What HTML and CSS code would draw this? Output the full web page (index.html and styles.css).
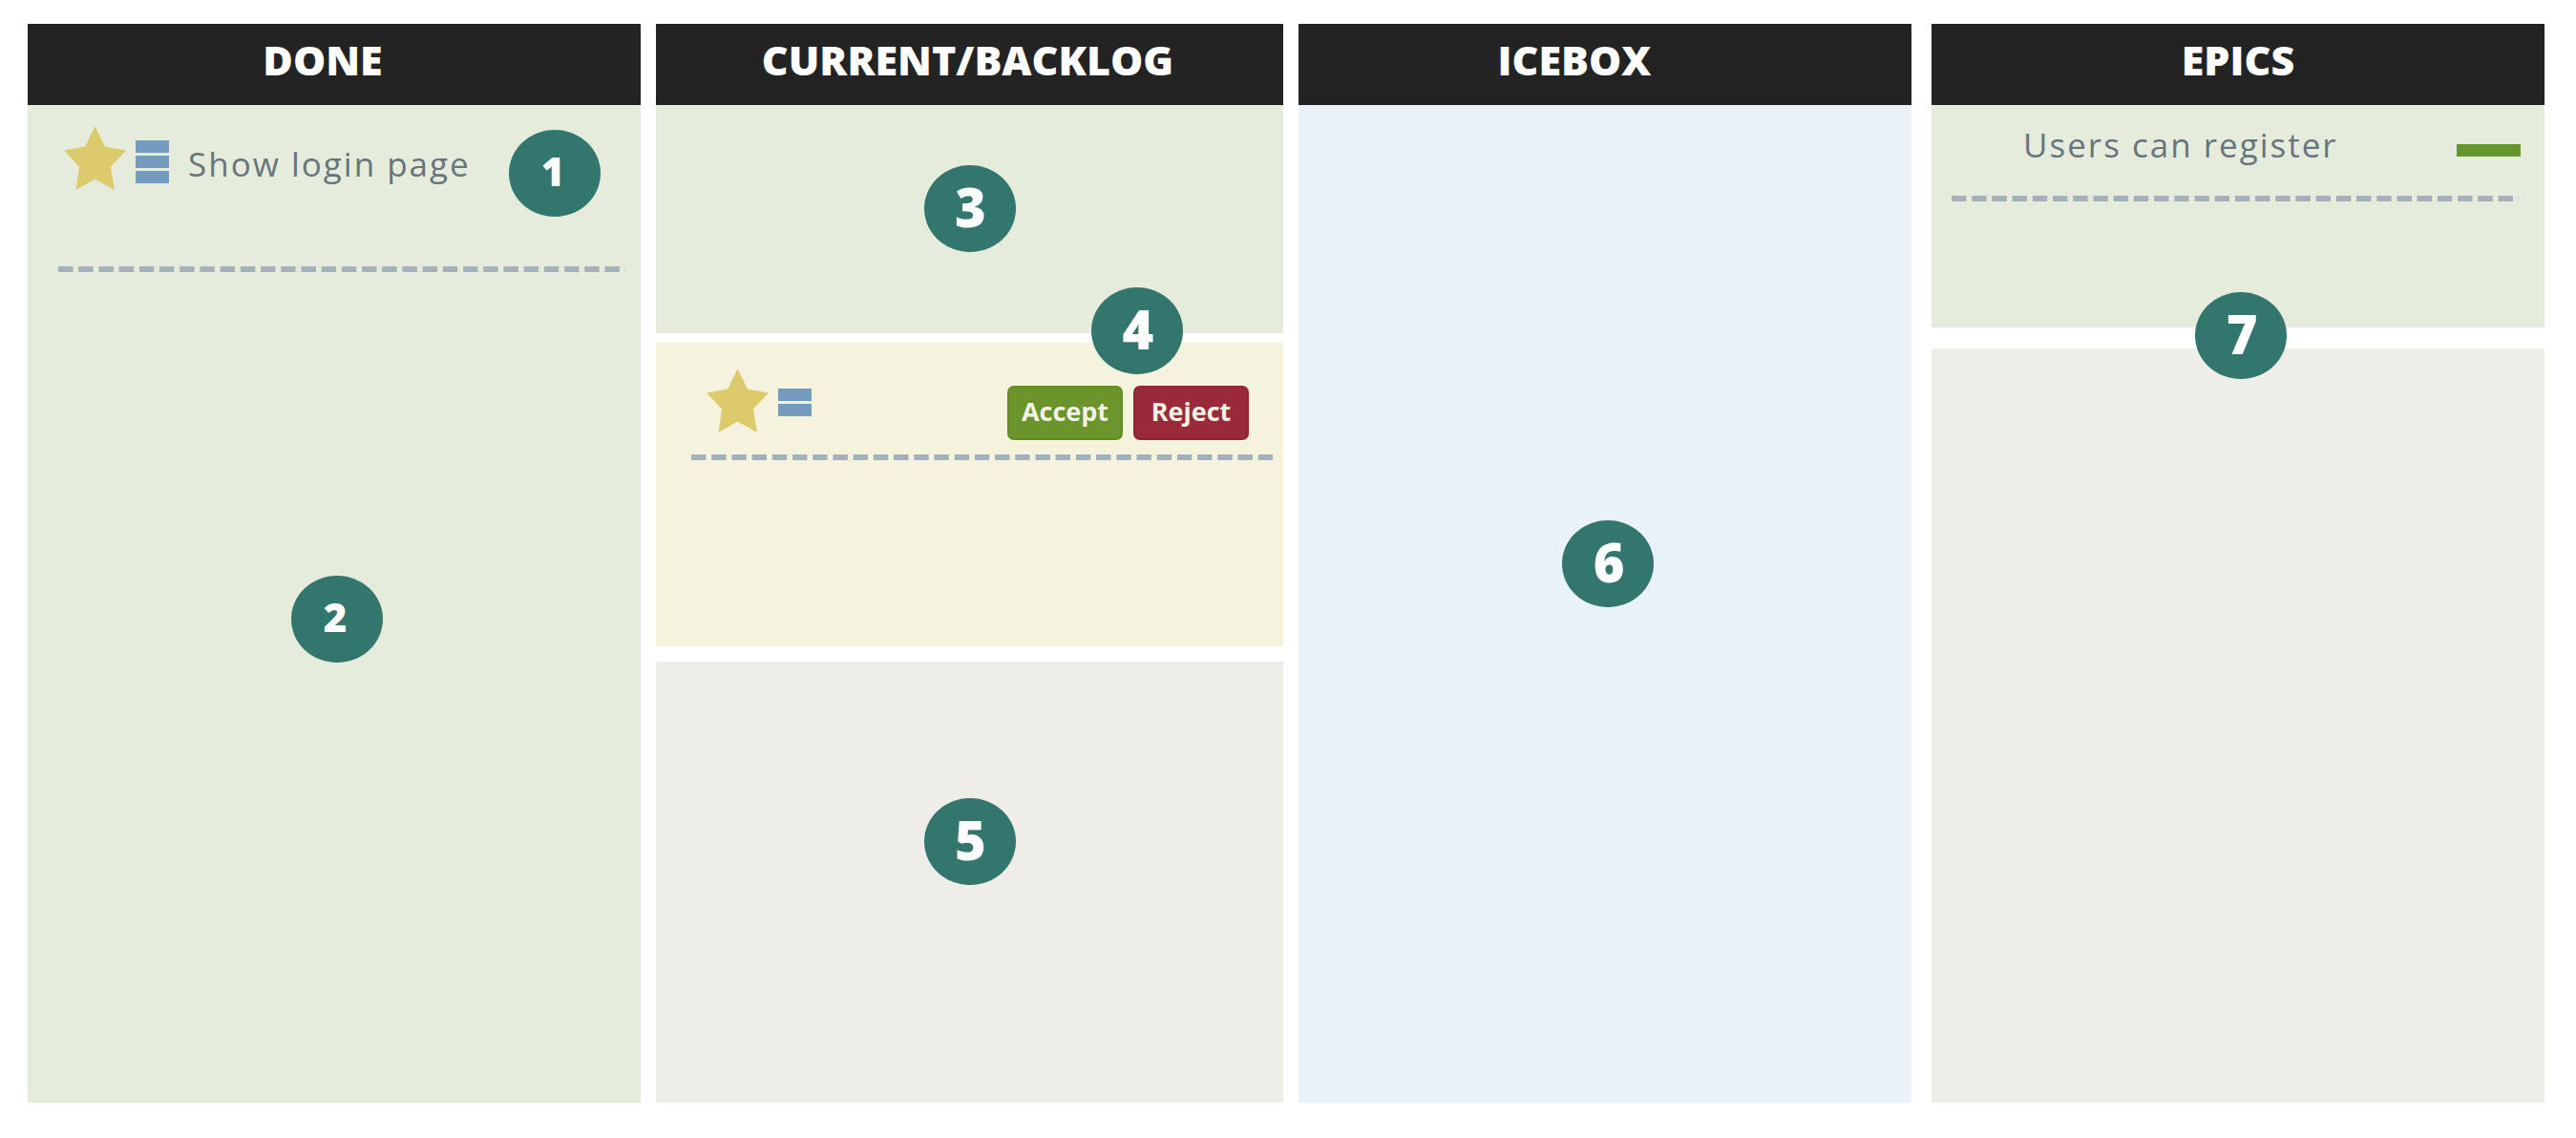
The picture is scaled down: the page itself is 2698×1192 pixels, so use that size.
FILE: index.html
```html
<!DOCTYPE html>
<html lang="en">
<head>
<meta charset="utf-8">
<meta name="viewport" content="width=device-width, initial-scale=1">
<title>Project board</title>
<link rel="stylesheet" href="styles.css">
</head>
<body>
<main class="board">
  <section class="column">
    <h2 class="column-title column-title--done">DONE</h2>
    <div class="lane lane--green lane--fill">
      <div class="story story--done">
        <svg class="star" viewBox="0 0 65 67" aria-hidden="true"><path d="M32.5 0 42.8 21.5 65 25.5 49 42.5 53 67 32.5 55.5 12.5 67 16 42.5 0 25.5 22.3 21.5Z"/></svg>
        <span class="points"><i></i><i></i><i></i></span>
        <span class="story-name">Show login page</span>
      </div>
      <hr class="divider divider--done">
      <span class="badge badge--small badge--story">1</span>
      <span class="badge badge--small badge--done">2</span>
    </div>
  </section>

  <section class="column">
    <h2 class="column-title column-title--current">CURRENT/BACKLOG</h2>
    <div class="lane lane--green lane--accepted">
      <span class="badge badge--accepted">3</span>
    </div>
    <div class="lane lane--cream lane--progress">
      <div class="story story--progress">
        <svg class="star" viewBox="0 0 65 67" aria-hidden="true"><path d="M32.5 0 42.8 21.5 65 25.5 49 42.5 53 67 32.5 55.5 12.5 67 16 42.5 0 25.5 22.3 21.5Z"/></svg>
        <span class="points"><i></i><i></i></span>
        <div class="actions">
          <button type="button" class="button button--accept">Accept</button>
          <button type="button" class="button button--reject">Reject</button>
        </div>
      </div>
      <hr class="divider divider--progress">
      <span class="badge badge--progress">4</span>
    </div>
    <div class="lane lane--gray lane--fill">
      <span class="badge badge--backlog">5</span>
    </div>
  </section>

  <section class="column">
    <h2 class="column-title column-title--icebox">ICEBOX</h2>
    <div class="lane lane--blue lane--fill">
      <span class="badge badge--icebox">6</span>
    </div>
  </section>

  <section class="column column--epics">
    <h2 class="column-title">EPICS</h2>
    <div class="lane lane--green lane--epic">
      <div class="epic">
        <span class="story-name">Users can register</span>
        <span class="progress"></span>
      </div>
      <hr class="divider divider--epic">
      <span class="badge badge--epics">7</span>
    </div>
    <div class="lane lane--gray lane--fill"></div>
  </section>
</main>
</body>
</html>
```

FILE: styles.css
```css
* {
  box-sizing: border-box;
}

body {
  margin: 0;
  background: #fff;
  font-family: "Open Sans", "Noto Sans", sans-serif;
}

.board {
  display: grid;
  grid-template-columns: 642fr 657fr 642fr 647fr;
  column-gap: 16px;
  min-height: 100vh;
  padding: 25px 33px 37px 29px;
}

.column {
  display: flex;
  flex-direction: column;
  min-width: 0;
}

.column--epics {
  padding-left: 5px;
}

.column-title {
  margin: 0;
  padding: 10px 0 19px;
  background: #232323;
  color: #fff;
  font-size: 43px;
  font-weight: 800;
  line-height: 56px;
  text-align: center;
}

.column-title--done {
  padding-right: 24px;
}

.column-title--current {
  padding-right: 4px;
}

.column-title--icebox {
  padding-right: 64px;
}

/* Lanes */
.lane {
  position: relative;
}

.lane--fill {
  flex: 1;
}

.lane--green {
  background: #e5ecdc;
}

.lane--cream {
  background: #f5f2de;
}

.lane--gray {
  background: #eeede7;
}

.lane--blue {
  background: #e9f1f9;
}

.lane--accepted {
  min-height: 239px;
  margin-bottom: 10px;
}

.lane--progress {
  min-height: 318px;
  margin-bottom: 16px;
}

.lane--epic {
  min-height: 233px;
  margin-bottom: 22px;
}

/* Stories */
.story {
  display: flex;
  align-items: flex-start;
}

.story--done {
  padding: 22px 0 0 38px;
}

.story--progress {
  padding: 27px 36px 0 53px;
}

.star {
  flex: none;
  width: 65px;
  height: 67px;
  fill: #dcca6d;
}

.points {
  display: flex;
  flex-direction: column;
  gap: 3px;
  margin: 15px 20px 0 10px;
}

.story--progress .points {
  margin-top: 21px;
}

.points i {
  width: 35px;
  height: 13px;
  background: #759cbf;
}

.story-name {
  color: #68757d;
  font-size: 35px;
  font-weight: 500;
  line-height: 40px;
  letter-spacing: 2px;
  white-space: nowrap;
}

.story--done .story-name {
  margin-top: 20px;
}

.epic {
  display: flex;
  align-items: center;
  justify-content: space-between;
  padding: 22px 25px 0 96px;
}

.progress {
  width: 67px;
  height: 13px;
  margin-top: 10px;
  background: #64962c;
}

.divider {
  height: 6px;
  border: 0;
  background: linear-gradient(90deg, #a5b1ba 75%, transparent 75%) 0 0 / 21px 6px round;
}

.divider--done {
  margin: 80px 16px 0 32px;
}

.divider--progress {
  margin: 15px 5px 0 37px;
}

.divider--epic {
  margin: 33px 27px 0 21px;
}

.actions {
  display: flex;
  gap: 11px;
  margin: 18px 0 0 auto;
}

.button {
  width: 121px;
  height: 57px;
  padding: 0 0 4px;
  border: 2px solid;
  border-radius: 7px;
  color: #f1f1e8;
  font: bold 27px/36px "Open Sans", "Noto Sans", sans-serif;
}

.button--accept {
  border-color: #648c27;
  background: #6b942a;
}

.button--reject {
  border-color: #902437;
  background: #9a2a3a;
}

/* Numbered markers laid over the lanes */
.badge {
  position: absolute;
  display: flex;
  align-items: center;
  justify-content: center;
  width: 96px;
  height: 91px;
  padding: 0 0 6px 2px;
  border-radius: 50%;
  background: #33766d;
  color: #fff;
  font-size: 56px;
  font-weight: 800;
  line-height: 76px;
}

.badge--small {
  padding: 0 4px 6px 0;
  font-size: 42px;
}

.badge--story {
  top: 26px;
  right: 42px;
}

.badge--done {
  top: 493px;
  left: 43%;
}

.badge--accepted {
  top: 63px;
  left: calc(50% - 48px);
}

.badge--progress {
  top: -58px;
  right: 105px;
  z-index: 1;
}

.badge--backlog {
  top: 143px;
  left: calc(50% - 48px);
}

.badge--icebox {
  top: 435px;
  left: 43%;
}

.badge--epics {
  top: 196px;
  left: 43%;
  z-index: 1;
}
```
